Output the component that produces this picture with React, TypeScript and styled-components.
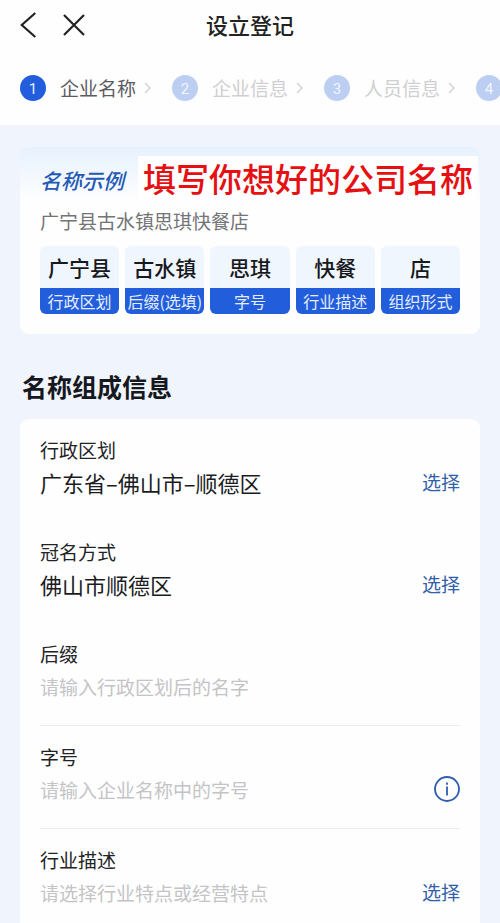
import React from "react";
import styled, { createGlobalStyle } from "styled-components";

const GlobalStyle = createGlobalStyle`
  *, *::before, *::after { box-sizing: border-box; }
  body {
    margin: 0;
    background: #f0f4fc;
    color: #1b1c1e;
    font-family: "Noto Sans CJK SC", sans-serif;
  }
  button, input { font-family: inherit; }
  button {
    margin: 0;
    padding: 0;
    border: 0;
    background: none;
    cursor: pointer;
  }
  h1, h2, h3, p, ol, ul { margin: 0; padding: 0; }
  ol, ul { list-style: none; }
`;

const Page = styled.div`
  display: flex;
  flex-direction: column;
  height: 100vh;
  overflow: hidden;
`;

const Header = styled.header`
  flex: none;
  background: #fefefe;
`;

const NavBar = styled.div`
  display: grid;
  grid-template-columns: 1fr auto 1fr;
  align-items: center;
  height: 50px;
  padding: 0 20px;
`;

const NavActions = styled.div`
  display: flex;
  align-items: center;
  gap: 27px;
`;

const IconButton = styled.button`
  display: flex;
  flex: none;
  color: ${(p) => p.color ?? "#222"};
`;

const Title = styled.h1`
  font-size: 22px;
  line-height: 30px;
  padding-bottom: 2px;
  font-weight: 500;
  color: #222;
`;

const Steps = styled.ol`
  display: flex;
  gap: 21px;
  height: 75px;
  padding: 0 0 0 20px;
  align-items: center;
  overflow: hidden;
`;

const Step = styled.li<{ $active?: boolean }>`
  display: flex;
  flex: none;
  align-items: center;
  font-size: 19px;
  line-height: 28px;
  color: ${(p) => (p.$active ? "#5c5c5e" : "#cfcfd1")};

  svg { margin-left: 8px; color: #d0d0d2; }
`;

const StepNumber = styled.span<{ $active?: boolean }>`
  display: grid;
  place-items: center;
  width: 26px;
  height: 26px;
  margin-right: 14px;
  border-radius: 50%;
  background: ${(p) => (p.$active ? "#215ddd" : "#bccef2")};
  color: ${(p) => (p.$active ? "#e6eeff" : "#f2f6ff")};
  font-family: Roboto, sans-serif;
  font-size: 15px;
`;

const Content = styled.main`
  flex: 1;
  min-height: 0;
  padding: 22px 20px 24px;
  overflow-y: auto;
  scrollbar-width: none;
`;

const Card = styled.section`
  position: relative;
  border-radius: 9px;
  background: #fefefe;
`;

const ExampleCard = styled(Card)`
  padding: 16px 20px 20px;
  background: linear-gradient(#e6f1fd, #fefefe 54px);
`;

const ExampleTitle = styled.h2`
  font-size: 21px;
  line-height: 34px;
  font-weight: 500;
  font-style: italic;
  color: #2459b5;
`;

const Callout = styled.p`
  position: absolute;
  top: 9px;
  right: 2px;
  padding: 0 5px;
  background: #fefefe;
  color: #e60f12;
  font-size: 33px;
  line-height: 44px;
  font-weight: 500;
  white-space: nowrap;
`;

const ExampleName = styled.p`
  margin-bottom: 10px;
  padding-top: 9px;
  font-size: 19px;
  line-height: 30px;
  color: #737476;
`;

const Parts = styled.ul`
  display: grid;
  grid-template-columns: repeat(5, 1fr);
  gap: 6px;
`;

const Part = styled.li`
  overflow: hidden;
  border-radius: 6px;
  background: #f0f6fe;
  text-align: center;
  white-space: nowrap;
`;

const PartValue = styled.div`
  font-size: 21px;
  line-height: 42px;
  font-weight: 500;
  color: #17191c;
`;

const PartKind = styled.div`
  display: flex;
  justify-content: center;
  background: #225edb;
  color: #e4edff;
  font-size: 16px;
  line-height: 26px;
`;

const SectionTitle = styled.h2`
  padding: 34px 2px 14px;
  font-size: 25px;
  line-height: 37px;
  font-weight: 700;
  color: #15181d;
`;

const Field = styled.div<{ $divided?: boolean }>`
  margin: 0 20px;
  padding: 17px 0 21px;
  border-bottom: ${(p) => (p.$divided ? "1px solid #ececee" : "0")};
`;

const FieldLabel = styled.label`
  display: block;
  font-size: 19px;
  line-height: 28px;
  color: #222325;
`;

const FieldRow = styled.div`
  display: flex;
  align-items: center;
  height: 36px;
`;

const FieldInput = styled.input<{ $large?: boolean }>`
  flex: 1;
  min-width: 0;
  height: 36px;
  padding: 0;
  border: 0;
  outline: 0;
  background: none;
  color: #1b1c1e;
  font-size: ${(p) => (p.$large ? 22 : 19)}px;

  &::placeholder { color: #c4c4c6; opacity: 1; }
`;

const SelectButton = styled.button`
  flex: none;
  color: #3260a8;
  font-size: 19px;
  line-height: 28px;
`;

const BackIcon = () => (
  <svg width="16" height="26" viewBox="0 0 16 26" fill="none" stroke="currentColor" strokeWidth="2.2">
    <path d="M15.3 1 1.8 13l13.5 12" />
  </svg>
);

const CloseIcon = () => (
  <svg width="22" height="22" viewBox="0 0 22 22" fill="none" stroke="currentColor" strokeWidth="2.2">
    <path d="m1 1 20 20M21 1 1 21" />
  </svg>
);

const ChevronIcon = () => (
  <svg width="7" height="12" viewBox="0 0 7 12" fill="none" stroke="currentColor" strokeWidth="1.3">
    <path d="m1 1 5 5-5 5" />
  </svg>
);

const InfoIcon = () => (
  <svg width="26" height="26" viewBox="0 0 26 26" fill="none" stroke="currentColor" strokeWidth="1.8">
    <circle cx="13" cy="13" r="12" />
    <path d="M13 10.5v9M13 6.5v2.2" />
  </svg>
);

const steps = ["企业名称", "企业信息", "人员信息", ""];

const parts = [
  { value: "广宁县", kind: "行政区划" },
  { value: "古水镇", kind: "后缀(选填)" },
  { value: "思琪", kind: "字号" },
  { value: "快餐", kind: "行业描述" },
  { value: "店", kind: "组织形式" },
];

type FieldData = {
  id: string;
  label: string;
  value?: string;
  placeholder?: string;
  action?: "select" | "info";
  divided?: boolean;
};

const fields: FieldData[] = [
  { id: "region", label: "行政区划", value: "广东省–佛山市–顺德区", action: "select" },
  { id: "naming", label: "冠名方式", value: "佛山市顺德区", action: "select" },
  { id: "suffix", label: "后缀", placeholder: "请输入行政区划后的名字", divided: true },
  { id: "brand", label: "字号", placeholder: "请输入企业名称中的字号", action: "info", divided: true },
  { id: "industry", label: "行业描述", placeholder: "请选择行业特点或经营特点", action: "select" },
];

export default function App() {
  return (
    <>
      <GlobalStyle />
      <Page>
        <Header>
          <NavBar>
            <NavActions>
              <IconButton type="button" aria-label="返回"><BackIcon /></IconButton>
              <IconButton type="button" aria-label="关闭"><CloseIcon /></IconButton>
            </NavActions>
            <Title>设立登记</Title>
          </NavBar>
          <Steps>
            {steps.map((name, i) => (
              <Step key={i} $active={i === 0}>
                <StepNumber $active={i === 0}>{i + 1}</StepNumber>
                {name}
                {name && <ChevronIcon />}
              </Step>
            ))}
          </Steps>
        </Header>
        <Content>
          <ExampleCard>
            <ExampleTitle>名称示例</ExampleTitle>
            <Callout>填写你想好的公司名称</Callout>
            <ExampleName>广宁县古水镇思琪快餐店</ExampleName>
            <Parts>
              {parts.map((part) => (
                <Part key={part.kind}>
                  <PartValue>{part.value}</PartValue>
                  <PartKind>{part.kind}</PartKind>
                </Part>
              ))}
            </Parts>
          </ExampleCard>
          <SectionTitle>名称组成信息</SectionTitle>
          <Card>
            {fields.map((f) => (
              <Field key={f.id} $divided={f.divided}>
                <FieldLabel htmlFor={f.id}>{f.label}</FieldLabel>
                <FieldRow>
                  <FieldInput
                    id={f.id}
                    type="text"
                    $large={Boolean(f.value)}
                    defaultValue={f.value}
                    placeholder={f.placeholder}
                    readOnly={f.action === "select"}
                  />
                  {f.action === "select" && <SelectButton type="button">选择</SelectButton>}
                  {f.action === "info" && (
                    <IconButton type="button" color="#2f5cb0" aria-label="字号说明"><InfoIcon /></IconButton>
                  )}
                </FieldRow>
              </Field>
            ))}
          </Card>
        </Content>
      </Page>
    </>
  );
}
